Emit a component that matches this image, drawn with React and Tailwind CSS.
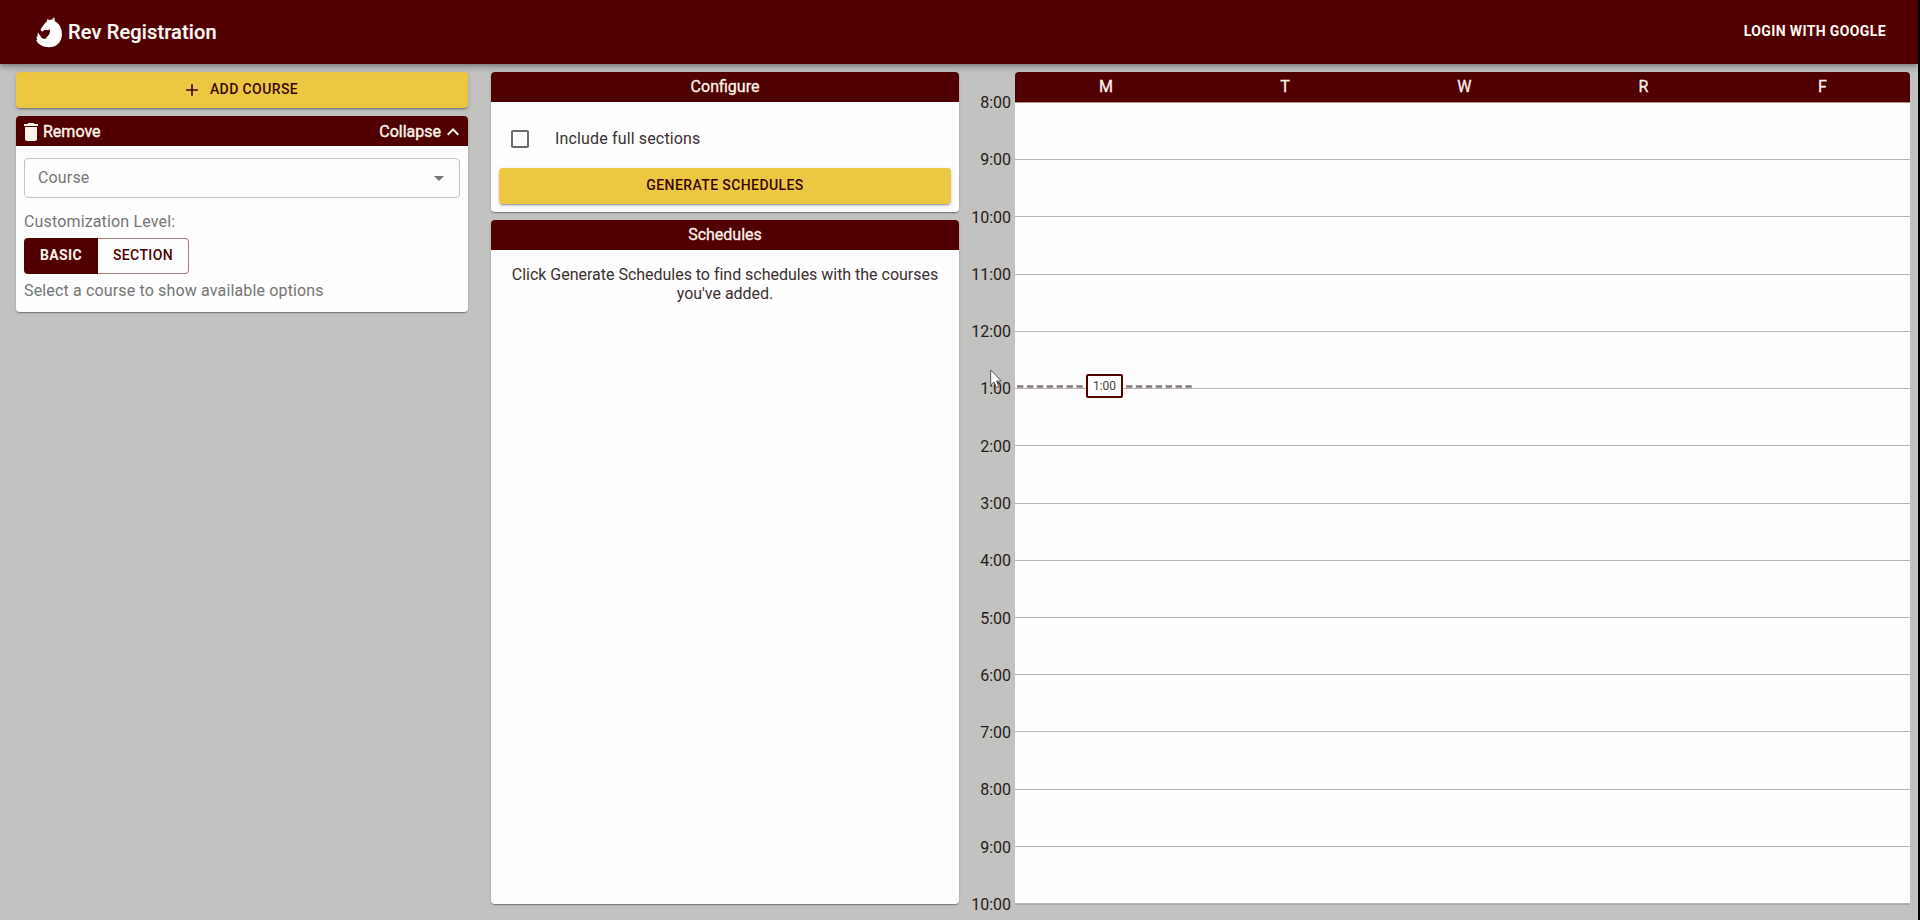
import React from "react";

const HOURS = ["8:00", "9:00", "10:00", "11:00", "12:00", "1:00", "2:00", "3:00", "4:00", "5:00", "6:00", "7:00", "8:00", "9:00", "10:00"];
const DAYS = ["M", "T", "W", "R", "F"];

const CARD =
  "rounded bg-[#fefefe] shadow-[0_2px_1px_-1px_rgba(0,0,0,0.2),0_1px_1px_0_rgba(0,0,0,0.14),0_1px_3px_0_rgba(0,0,0,0.12)]";
const GOLD_BUTTON =
  "flex h-9 w-full shrink-0 items-center justify-center rounded bg-[#ecc742] pb-[2px] text-sm font-medium tracking-[0.4px] text-[#380808] shadow-[0_3px_1px_-2px_rgba(0,0,0,0.2),0_2px_2px_0_rgba(0,0,0,0.14),0_1px_5px_0_rgba(0,0,0,0.12)]";

function Logo() {
  return (
    <svg className="h-[31px] w-[27px] shrink-0" viewBox="0 0 27 31" fill="#fffdfb">
      <path d="M11.2 2 L13.200 3.100 L16 2.600 L18.300 0.200 L18.900 4.200 C23.600 6.600 26.400 12 25.900 18.200 C25.400 25.400 20.200 30.300 13 30.300 C6.600 30.300 1.400 27 0.100 22.800 L1.300 23.100 L0.300 19.600 L1.300 19.900 L2 15 C2.500 16.800 3.200 17.700 4.200 18.200 C4.800 20.300 6 21.600 7.600 21.800 C9.200 21.900 10.300 21.400 10.900 20.900 L9.800 20.700 C12.600 19.200 14.600 16 13.700 12.300 C12.400 13.200 10.400 13.300 8.700 12.900 L5.900 14.700 L4.500 12.700 C5.800 10.400 7 8.600 8.900 6.200 C10 5.200 11 4.400 11.100 3.800 Z" />
    </svg>
  );
}

function Header() {
  return (
    <header className="z-10 flex h-16 shrink-0 items-center justify-between bg-[#500000] pr-[32px] pl-[36px] text-[#fff8f4] shadow-[0_2px_4px_-1px_rgba(0,0,0,0.2),0_4px_5px_0_rgba(0,0,0,0.14),0_1px_10px_0_rgba(0,0,0,0.12)]">
      <div className="flex items-center gap-[5px]">
        <Logo />
        <h1 className="text-xl font-medium tracking-[0.15px] [-webkit-text-stroke:0.2px]">Rev Registration</h1>
      </div>
      <button className="pb-[2px] text-sm font-bold tracking-[0.38px] whitespace-nowrap">LOGIN WITH GOOGLE</button>
    </header>
  );
}

function PanelHeader({ children }) {
  return (
    <div className="flex h-[30px] shrink-0 items-center justify-center rounded-t bg-[#500000] pb-px text-base text-[#fff3ec] [-webkit-text-stroke:0.3px]">
      {children}
    </div>
  );
}

function CoursePanel() {
  return (
    <section className="flex w-[452px] shrink-0 flex-col gap-2">
      <button className={GOLD_BUTTON}>
        <svg className="mt-px mr-2 -ml-1 size-5" viewBox="0 0 24 24" fill="currentColor">
          <path d="M19 13h-6v6h-2v-6H5v-2h6V5h2v6h6v2z" />
        </svg>
        ADD COURSE
      </button>
      <div className={`${CARD} h-[196px]`}>
        <div className="flex h-[30px] items-center justify-between rounded-t bg-[#500000] px-[3px] pt-px text-base text-[#fff3ec] [-webkit-text-stroke:0.4px]">
          <span className="flex items-center">
            <svg className="size-6" viewBox="0 0 24 24" fill="currentColor">
              <path d="M6 19c0 1.1.9 2 2 2h8c1.1 0 2-.9 2-2V7H6v12zM19 4h-3.500l-1-1h-5l-1 1H5v2h14V4z" />
            </svg>
            Remove
          </span>
          <span className="flex items-center">
            Collapse
            <svg className="size-6" viewBox="0 0 24 24" fill="currentColor">
              <path d="M12 8l-6 6 1.410 1.410L12 10.830l4.590 4.580L18 14z" />
            </svg>
          </span>
        </div>
        <div className="px-2 pt-3 text-base leading-6 tracking-[0.15px] text-[#757575]">
          <div className="flex h-10 items-center justify-between rounded border border-[#c4c4c4] pr-2 pl-[13px]">
            Course
            <svg className="size-6" viewBox="0 0 24 24" fill="currentColor">
              <path d="M7 10l5 5 5-5z" />
            </svg>
          </div>
          <p className="mt-3">Customization Level:</p>
          <div className="mt-1 flex h-9 w-[165px] text-sm tracking-[0.4px]">
            <button className="w-[74px] rounded-l bg-[#500000] pb-[3px] font-bold text-[#fff3ec]">BASIC</button>
            <button className="flex-1 rounded-r border border-l-0 border-[#a77f7f] pb-[3px] font-medium text-[#500000]">
              SECTION
            </button>
          </div>
          <p className="mt-[5px]">Select a course to show available options</p>
        </div>
      </div>
    </section>
  );
}

function SchedulePanel() {
  return (
    <section className="flex w-[468px] shrink-0 flex-col gap-2">
      <div className={`${CARD} h-[140px]`}>
        <PanelHeader>Configure</PanelHeader>
        <div className="px-2 pt-[17px] pb-2">
          <label className="mb-[9px] flex h-10 items-center pl-[9px] text-base tracking-[0.15px] text-[#3b3030]">
            <svg className="mr-[23px] size-6 text-[#6b6b6b]" viewBox="0 0 24 24" fill="currentColor">
              <path d="M19 5v14H5V5h14m0-2H5c-1.100 0-2 .900-2 2v14c0 1.100.900 2 2 2h14c1.100 0 2-.900 2-2V5c0-1.100-.900-2-2-2z" />
            </svg>
            Include full sections
          </label>
          <button className={GOLD_BUTTON}>GENERATE SCHEDULES</button>
        </div>
      </div>
      <div className={`${CARD} min-h-0 flex-1`}>
        <PanelHeader>Schedules</PanelHeader>
        <p className="px-4 pt-[15px] text-center text-base leading-[19px] tracking-[-0.02px] text-[#3b3030]">
          Click Generate Schedules to find schedules with the courses you've added.
        </p>
      </div>
    </section>
  );
}

function HoverTime() {
  return (
    <div className="absolute top-[271px] left-[1px] flex h-6 w-[177px] items-center">
      <svg className="mt-px h-[3px] w-[67px]" viewBox="0 0 67 3">
        <path d="M1 1.500H67" stroke="#857878" strokeWidth="2.400" strokeDasharray="6.400 3.500" />
      </svg>
      <span className="mx-[3px] flex h-6 w-[37px] shrink-0 items-center justify-center rounded-xs border-2 border-[#500000] bg-white text-xs text-[#4a4040]">
        1:00
      </span>
      <svg className="mt-px h-[3px] w-[67px]" viewBox="0 0 67 3">
        <path d="M0 1.500H66" stroke="#857878" strokeWidth="2.400" strokeDasharray="6.400 3.500" />
      </svg>
    </div>
  );
}

function Cursor() {
  return (
    <svg className="absolute top-[297px] left-[31px] h-[20px] w-[13px]" viewBox="0 0 13 20">
      <path d="M0.700 1V16L4 12.900L6.400 18.600L8.900 17.500L6.500 12H11.300Z" fill="#fff" stroke="#444" strokeWidth="0.900" />
    </svg>
  );
}

function Calendar() {
  return (
    <section className="flex min-w-0 flex-1">
      <div className="relative flex w-[56px] shrink-0 flex-col pt-[19px] pr-[4px] text-right text-base leading-6">
        {HOURS.map((hour, i) => (
          <div key={i} className="h-[57.29px] shrink-0 text-[#261a1a]">
            {hour}
          </div>
        ))}
        <Cursor />
      </div>
      <div className="flex min-w-0 flex-1 flex-col">
        <div className="grid h-[30px] shrink-0 grid-cols-[repeat(5,179.1px)] items-center rounded-t bg-[#500000] pb-px pl-[1.5px] text-center text-base text-[#fff3ec] [-webkit-text-stroke:0.3px]">
          {DAYS.map((day) => (
            <span key={day}>{day}</span>
          ))}
        </div>
        <div className="relative flex flex-1 flex-col border-t border-[#b98f8f] bg-[#fefefe] shadow-[0_1px_0_#aaa]">
          {HOURS.slice(1).map((hour, i) => (
            <div key={i} className="flex-1 border-b border-[#b4b4b4] last:border-b-0" />
          ))}
          <HoverTime />
        </div>
      </div>
    </section>
  );
}

export default function App() {
  return (
    <div className="h-[920px] w-full overflow-hidden bg-black pr-[2px] font-['Roboto',sans-serif]">
      <div className="flex h-full flex-col bg-[#c2c2c1]">
        <Header />
        <main className="flex min-h-0 flex-1 pt-2 pr-2 pb-4 pl-4">
          <CoursePanel />
          <div className="w-[23px] shrink-0" />
          <SchedulePanel />
          <Calendar />
        </main>
      </div>
    </div>
  );
}
